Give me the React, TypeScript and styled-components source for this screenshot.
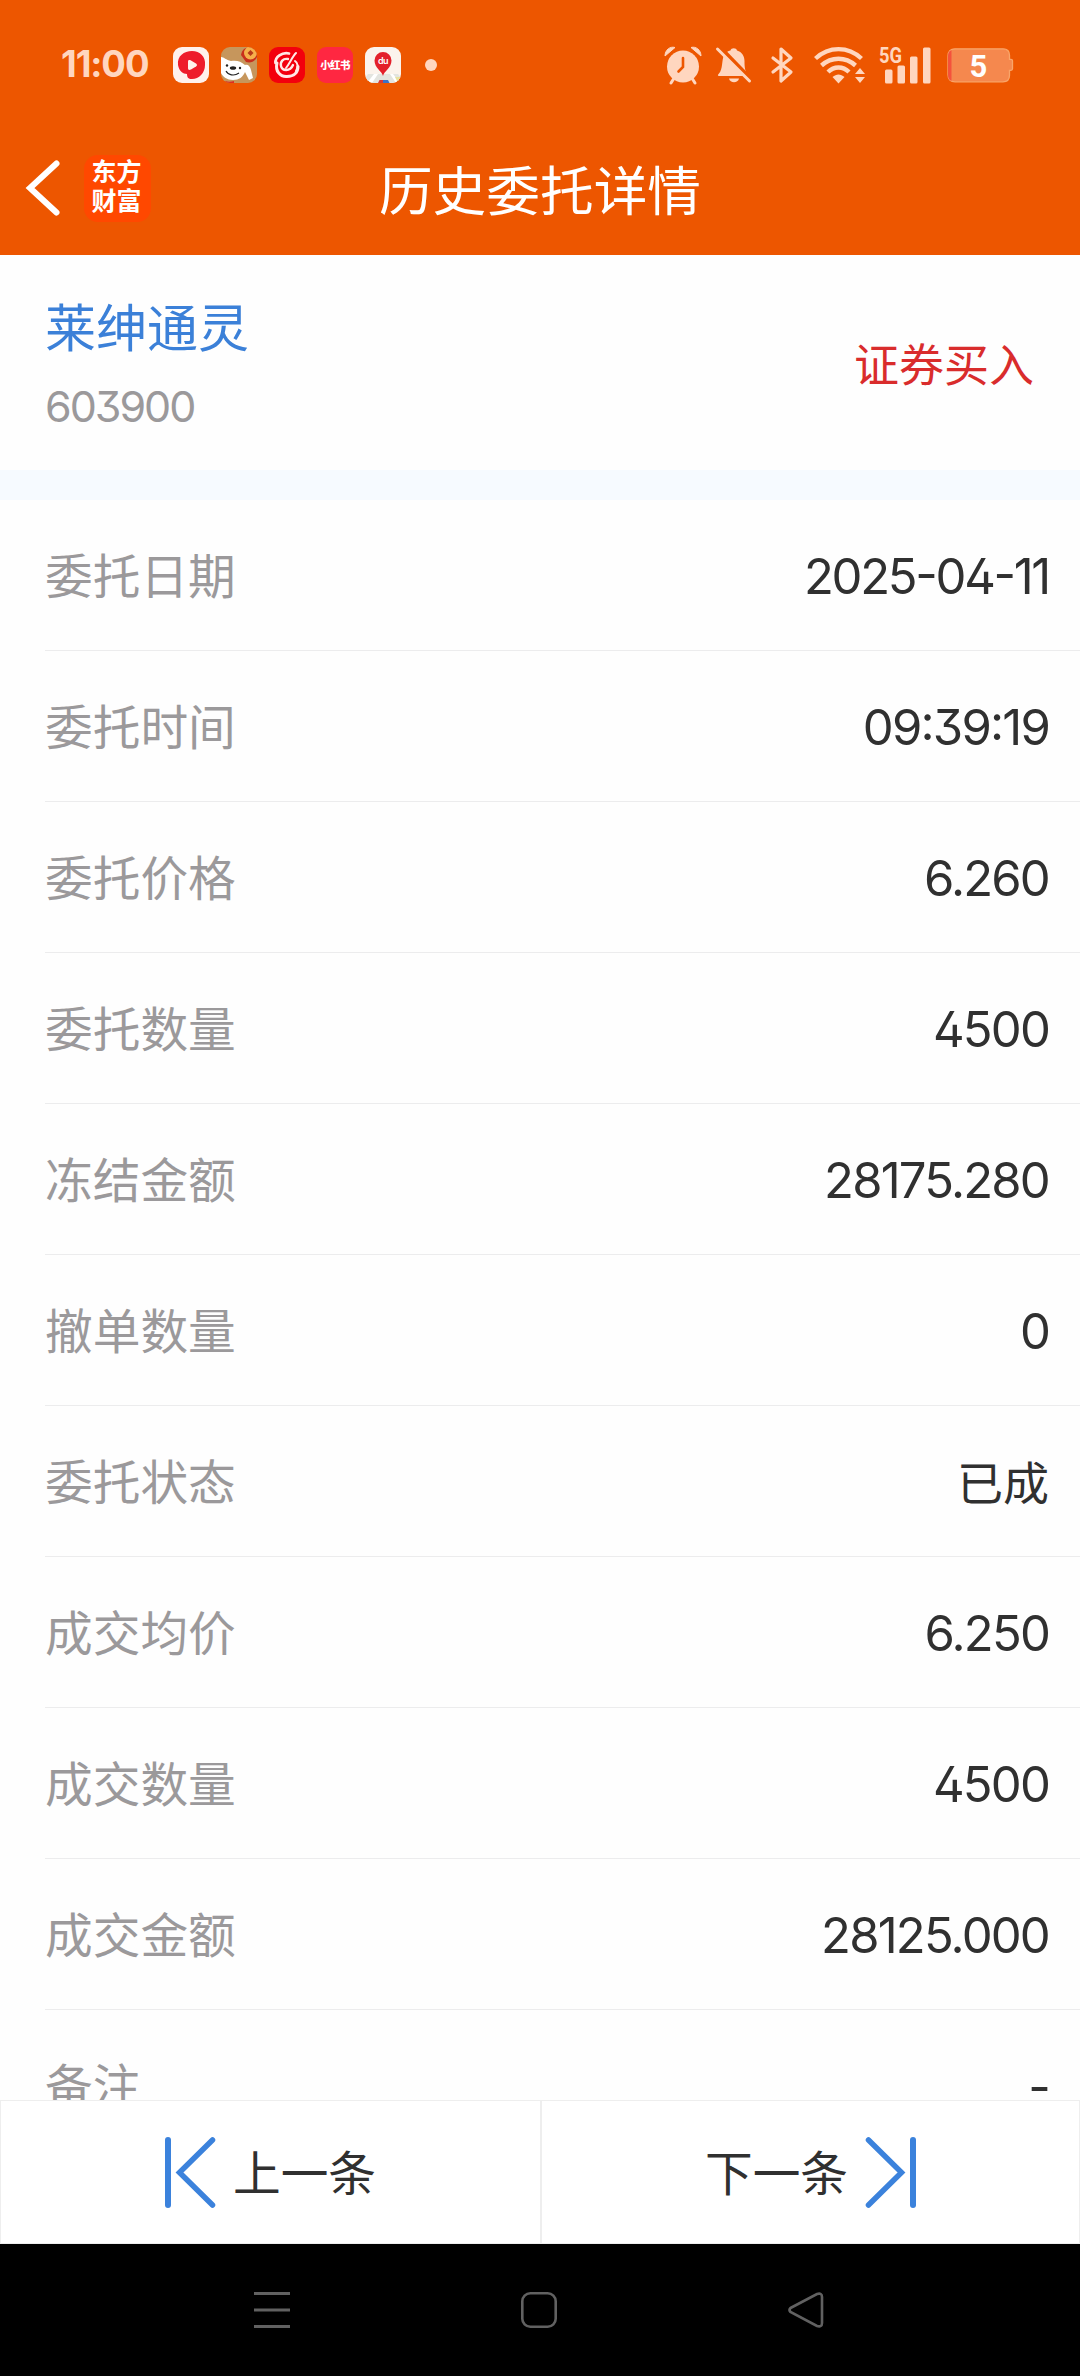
import React from "react";
import styled, { createGlobalStyle } from "styled-components";

const GlobalStyle = createGlobalStyle`
  * { box-sizing: border-box; }
  body { margin: 0; background: #fff; }
`;

const cjk = `"Noto Sans CJK SC", sans-serif`;
const latin = `Inter, "Noto Sans CJK SC", sans-serif`;
const tint = "#ffd6bf";

const Screen = styled.div`
  display: flex;
  flex-direction: column;
  width: 1080px;
  height: 2376px;
  overflow: hidden;
  background: #fefefe;
  font-family: ${cjk};
  color: #303030;
`;

const TopArea = styled.header`
  flex: none;
  height: 255px;
  background: #ed5600;
`;

const StatusBar = styled.div`
  display: flex;
  align-items: center;
  justify-content: space-between;
  height: 130px;
  padding: 0 67px 0 61px;
`;

const StatusGroup = styled.div<{ $gap: number }>`
  display: flex;
  align-items: center;
  gap: ${(p) => p.$gap}px;
`;

const Clock = styled.span`
  width: 100px;
  padding-bottom: 2px;
  font: 700 36.5px/40px ${latin};
  letter-spacing: -1.1px;
  color: ${tint};
`;

const AppBadge = styled.span<{ $bg: string }>`
  display: flex;
  align-items: center;
  justify-content: center;
  width: 36px;
  height: 36px;
  border-radius: 9px;
  overflow: hidden;
  background: ${(p) => p.$bg};
  color: #fff;
  font: 900 10.5px/14px ${cjk};
  letter-spacing: -0.6px;
  white-space: nowrap;
`;

const Dot = styled.span`
  width: 12px;
  height: 12px;
  margin-left: 12px;
  border-radius: 50%;
  background: ${tint};
`;

const Icon = styled.svg<{ $ml?: number }>`
  display: block;
  flex: none;
  margin-left: ${(p) => p.$ml ?? 0}px;
  overflow: visible;
`;

const TitleBar = styled.div`
  display: grid;
  grid-template-columns: 200px 1fr 200px;
  align-items: center;
  height: 125px;
  padding-bottom: 9px;
`;

const BackGroup = styled.div`
  display: flex;
  align-items: center;
  gap: 24px;
  padding-left: 26px;
`;

const BrandLogo = styled.div`
  display: flex;
  flex-direction: column;
  align-items: center;
  width: 67px;
  height: 67px;
  padding: 1px 2px 0 0;
  border-radius: 14px;
  background: #ff4800;
  color: #fff;
  font: 700 25px/29.5px ${cjk};
`;

const Title = styled.h1`
  margin: 0;
  padding-bottom: 1px;
  text-align: center;
  font: 400 53.7px/60px ${cjk};
  color: #fff;
`;

const StockHeader = styled.section`
  display: flex;
  justify-content: space-between;
  align-items: center;
  flex: none;
  height: 215px;
  padding: 0 46px 0 45px;
`;

const StockName = styled.div`
  padding-top: 5px;
  font-size: 51px;
  line-height: 72px;
  color: #3b80d8;
`;

const StockCode = styled.div`
  margin-top: 9px;
  font: 400 43px/72px ${latin};
  font-feature-settings: "cv09", "cv02";
  letter-spacing: -2px;
  color: #9b999b;
`;

const Side = styled.div`
  font-size: 45px;
  line-height: 60px;
  color: #d92c2c;
`;

const Band = styled.div`
  flex: none;
  height: 30px;
  background: #f6faff;
`;

const Details = styled.dl`
  flex: 1;
  min-height: 0;
  margin: 0;
  padding-left: 45px;
  overflow: hidden;
`;

const Row = styled.div`
  display: flex;
  align-items: center;
  justify-content: space-between;
  height: 151px;
  padding-right: 31px;
  border-bottom: 1px solid #ececed;
`;

const Label = styled.dt`
  padding-bottom: 2px;
  font-size: 47.7px;
  line-height: 70px;
  color: #9b999b;
`;

const Value = styled.dd<{ $cjk?: boolean; $tracking?: number }>`
  margin: 0;
  padding: ${(p) => (p.$cjk ? "0 0 2px" : "3px 0 0")};
  font-family: ${(p) => (p.$cjk ? cjk : latin)};
  font-size: ${(p) => (p.$cjk ? 46 : 49)}px;
  font-feature-settings: "cv09", "cv02", "calt";
  line-height: 70px;
  letter-spacing: ${(p) => (p.$cjk ? 0 : p.$tracking ?? -1.8)}px;
`;

const Pager = styled.div`
  display: grid;
  grid-template-columns: 1fr 1fr;
  flex: none;
  height: 144px;
  border: 1px solid #eee;
  background: #fff;
`;

const PagerButton = styled.button`
  display: flex;
  align-items: center;
  justify-content: center;
  gap: 18px;
  padding: 0;
  border: 0;
  background: none;
  font: 400 47.7px/60px ${cjk};
  color: #303030;
  & + & { border-left: 2px solid #eee; }
`;

const PagerText = styled.span`
  padding-bottom: 3px;
`;

const NavBar = styled.nav`
  display: flex;
  justify-content: space-between;
  align-items: center;
  flex: none;
  height: 132px;
  padding: 0 256px 0 254px;
  background: #000;
`;

const rows: { label: string; value: string; cjk?: boolean; tracking?: number }[] = [
  { label: "委托日期", value: "2025-04-11", tracking: -2.3 },
  { label: "委托时间", value: "09:39:19" },
  { label: "委托价格", value: "6.260" },
  { label: "委托数量", value: "4500" },
  { label: "冻结金额", value: "28175.280" },
  { label: "撤单数量", value: "0" },
  { label: "委托状态", value: "已成", cjk: true },
  { label: "成交均价", value: "6.250" },
  { label: "成交数量", value: "4500" },
  { label: "成交金额", value: "28125.000" },
  { label: "备注", value: "-" },
];

const VideoApp = () => (
  <AppBadge $bg="#fff1ec">
    <Icon width="36" height="36" viewBox="0 0 36 36">
      <path d="M5 18C4 9 11 4 19 4c8 0 14 6 13 14 0 8-6 14-13 14-4 0-5-2-5-5-4 0-8-3-9-9z" fill="#ee1c2b" />
      <path d="M15 15c0-2 1-2.500 3-1.500l5 3c1.300.8 1.300 2.200 0 3l-5 3c-2 1-3 .5-3-1.500z" fill="#fff1ec" />
    </Icon>
  </AppBadge>
);

const DogApp = () => (
  <AppBadge $bg="#c6965c">
    <Icon width="36" height="36" viewBox="0 0 36 36">
      <path d="M20 8c1-6 5-8 10-8h6v10c-3 6-8 6-11 5z" fill="#c92f1c" />
      <circle cx="29.500" cy="6" r="6.500" fill="#f6b04b" />
      <path d="M29.500 3l3 3-3 3-3-3z" fill="#b93a1a" />
      <path d="M0 10c3 0 5 3 10 4 5-1 10 0 14 4 3-1 5 1 6 5l2 8-4 2-4-8c-2 5-6 8-12 8-6 0-10-3-12-7z" fill="#fff" />
      <ellipse cx="12" cy="21" rx="3.200" ry="1.800" fill="#222" />
      <circle cx="6" cy="18.500" r="1.200" fill="#222" />
      <circle cx="19" cy="21" r="1.200" fill="#222" />
      <path d="M5 24c2 4 8 5.500 13 2" fill="none" stroke="#222" strokeWidth="1.200" />
      <path d="M4 34c3 1 6 1 9 0v2H5z" fill="#dc2d24" />
    </Icon>
  </AppBadge>
);

const SwirlApp = () => (
  <AppBadge $bg="#f3000d">
    <Icon width="36" height="36" viewBox="0 0 36 36" fill="none" stroke="#ffe9e5" strokeLinecap="round">
      <path d="M20 6.500C13 5 6 10 6.500 16" strokeWidth="2.800" />
      <path d="M8 16C6 24 11 30 18 29.500c7 0 11-4 11-10" strokeWidth="3" />
      <path d="M19 12c-5-1-8 3-7 7 1 5 9 6 12-1" strokeWidth="2.400" />
      <path d="M27 6c-4 4-6 10-10 15" strokeWidth="2" />
      <path d="M26 14c3 2 3 6 1 10" strokeWidth="2" />
    </Icon>
  </AppBadge>
);

const MapApp = () => (
  <AppBadge $bg="#fbf3ec">
    <Icon width="36" height="36" viewBox="0 0 36 36">
      <path d="M3 27h30l3 4v5H0v-5z" fill="#e3e4df" />
      <path d="M9 27L2 36h5l6-9zM25 27l6 9h4l-7-9z" fill="#fff" />
      <path d="M30 30h6v6h-3z" fill="#e8e2a0" />
      <path d="M14.500 33H18v3h-5z" fill="#d83a3a" />
      <path d="M18 33h5l1.500 3H18z" fill="#3a72c8" />
      <path d="M18 29c-1-5-8.500-8-8.500-15.500a8.500 8.500 0 0 1 17 0c0 7.500-7.500 10.500-8.500 15.500z" fill="#e3202a" />
      <text x="18" y="17" textAnchor="middle" fontFamily="Inter, sans-serif" fontSize="9" fontWeight="600" fill="#fff">du</text>
    </Icon>
  </AppBadge>
);

const AlarmIcon = () => (
  <Icon width="38" height="38" viewBox="0 0 38 38">
    <circle cx="19" cy="20.500" r="16" fill={tint} />
    <path d="M1 10C1 4 6 0 11 1.500zM37 10C37 4 32 0 27 1.500z" fill={tint} stroke={tint} strokeLinejoin="round" />
    <path d="M9.500 33L7 37M28.500 33l2.500 4" stroke={tint} strokeWidth="3" strokeLinecap="round" />
    <path d="M19 12v9l-4.500 4.500" fill="none" stroke="#ed5600" strokeWidth="2.600" strokeLinecap="round" />
  </Icon>
);

const MutedBellIcon = () => (
  <Icon $ml={14} width="35" height="36" viewBox="0 0 35 36">
    <path d="M8 8c1.500-2.500 4-4 6.500-4.500C15 .5 20.500.5 21 3.500 26 5 28.500 9 28.500 14c0 7 .5 11 4.500 15H3c-1.500 0-1.500-1 0-2.500C7 22 5.500 14 8 8z" fill={tint} />
    <path d="M13 31.500h10c-1 5-9 5-10 0z" fill={tint} />
    <path d="M3.500 0l32 33" stroke="#ed5600" strokeWidth="4.500" />
    <path d="M1.500 2l32 32" stroke={tint} strokeWidth="3" strokeLinecap="round" />
  </Icon>
);

const BluetoothIcon = () => (
  <Icon $ml={20} width="22" height="36" viewBox="0 0 22 36">
    <path d="M2 11l18 14-10 9V2l10 9L2 25" fill="none" stroke={tint} strokeWidth="3.200" strokeLinejoin="round" strokeLinecap="round" />
  </Icon>
);

const WifiIcon = () => (
  <Icon $ml={21} width="51" height="37" viewBox="0 0 51 37">
    <g fill="none" stroke={tint} strokeWidth="4.400">
      <path d="M1.500 11.500C15-1 34-1 47.500 11.500" />
      <path d="M7.500 18.500c10-9 24-9 34 0" />
      <path d="M14 25c6-6 15-6 21 0" />
    </g>
    <path d="M18.500 30c4-3.500 8-3.500 12 0l-6 6.500zM41 27l5-6 5 6zM41 30h10l-5 6z" fill={tint} />
  </Icon>
);

const SignalIcon = () => (
  <Icon $ml={14} width="52" height="37" viewBox="0 0 52 37">
    <text x="0" y="15.500" textLength="23" lengthAdjust="spacingAndGlyphs" fontFamily="Roboto, sans-serif" fontSize="22" fontWeight="700" fill={tint}>5G</text>
    <g fill={tint}>
      <rect x="6" y="22.500" width="7.500" height="14" rx="1.500" />
      <rect x="18.500" y="18.500" width="7.500" height="18" rx="1.500" />
      <rect x="31" y="9.500" width="7.500" height="27" rx="1.500" />
      <rect x="44" y=".5" width="7.500" height="36" rx="1.500" />
    </g>
  </Icon>
);

const BatteryIcon = () => (
  <Icon $ml={16} width="66" height="35" viewBox="0 0 66 35">
    <path d="M8 .8h48c4 0 6.500 2.500 6.500 6.500v4h1.500q1.500 0 1.500 1.500v8q0 1.500-1.500 1.500h-1.500v5c0 4-2.500 6.500-6.500 6.500H8c-4.500 0-7-2.500-7-7V8C1 3.500 3.500.8 8 .8z" fill="#f5884e" stroke="#f9a569" strokeWidth="1.300" />
    <path d="M4.500 2v31C2 32 1 30 1 27V8c0-3 1-5 3.500-6z" fill="#f4523c" />
    <text x="31.500" y="28.500" textAnchor="middle" fontFamily="Roboto, sans-serif" fontSize="31" fontWeight="700" fill="#fff">5</text>
  </Icon>
);

const EdgeArrow = ({ flip }: { flip?: boolean }) => (
  <Icon width="50" height="71" viewBox="0 0 50 71">
    <g transform={flip ? "translate(50 0) scale(-1 1)" : undefined} fill="none" stroke="#3b82dc" strokeLinecap="round">
      <path d="M3 3v65" strokeWidth="6" />
      <path d="M47.500 3L14.500 35.500l33 32.500" strokeWidth="5.500" />
    </g>
  </Icon>
);

export default function App() {
  return (
    <Screen>
      <GlobalStyle />
      <TopArea>
        <StatusBar>
          <StatusGroup $gap={12}>
            <Clock>11:00</Clock>
            <VideoApp />
            <DogApp />
            <SwirlApp />
            <AppBadge $bg="#ff2741">小红书</AppBadge>
            <MapApp />
            <Dot />
          </StatusGroup>
          <StatusGroup $gap={0}>
            <AlarmIcon />
            <MutedBellIcon />
            <BluetoothIcon />
            <WifiIcon />
            <SignalIcon />
            <BatteryIcon />
          </StatusGroup>
        </StatusBar>
        <TitleBar>
          <BackGroup>
            <Icon width="34" height="56" viewBox="0 0 34 56">
              <path d="M30.500 3.500L4 28l26.500 24.500" fill="none" stroke="#fff" strokeWidth="6" strokeLinecap="round" />
            </Icon>
            <BrandLogo>
              <span>东方</span>
              <span>财富</span>
            </BrandLogo>
          </BackGroup>
          <Title>历史委托详情</Title>
        </TitleBar>
      </TopArea>
      <StockHeader>
        <div>
          <StockName>莱绅通灵</StockName>
          <StockCode>603900</StockCode>
        </div>
        <Side>证券买入</Side>
      </StockHeader>
      <Band />
      <Details>
        {rows.map((r) => (
          <Row key={r.label}>
            <Label>{r.label}</Label>
            <Value $cjk={r.cjk} $tracking={r.tracking}>{r.value}</Value>
          </Row>
        ))}
      </Details>
      <Pager>
        <PagerButton>
          <EdgeArrow />
          <PagerText>上一条</PagerText>
        </PagerButton>
        <PagerButton>
          <PagerText>下一条</PagerText>
          <EdgeArrow flip />
        </PagerButton>
      </Pager>
      <NavBar>
        <Icon width="36" height="36" viewBox="0 0 36 36">
          <path d="M0 1.500h36M0 18h36M0 34.500h36" stroke="#616161" strokeWidth="3" />
        </Icon>
        <Icon width="36" height="36" viewBox="0 0 36 36">
          <rect x="1.300" y="1.300" width="33.400" height="33.400" rx="8" fill="none" stroke="#616161" strokeWidth="2.600" />
        </Icon>
        <Icon width="36" height="36" viewBox="0 0 36 36">
          <path d="M2.500 16L29 2q5-1.500 5 3v26q0 4.500-5 3L2.500 20q-2-2 0-4z" fill="none" stroke="#616161" strokeWidth="2.600" />
        </Icon>
      </NavBar>
    </Screen>
  );
}
